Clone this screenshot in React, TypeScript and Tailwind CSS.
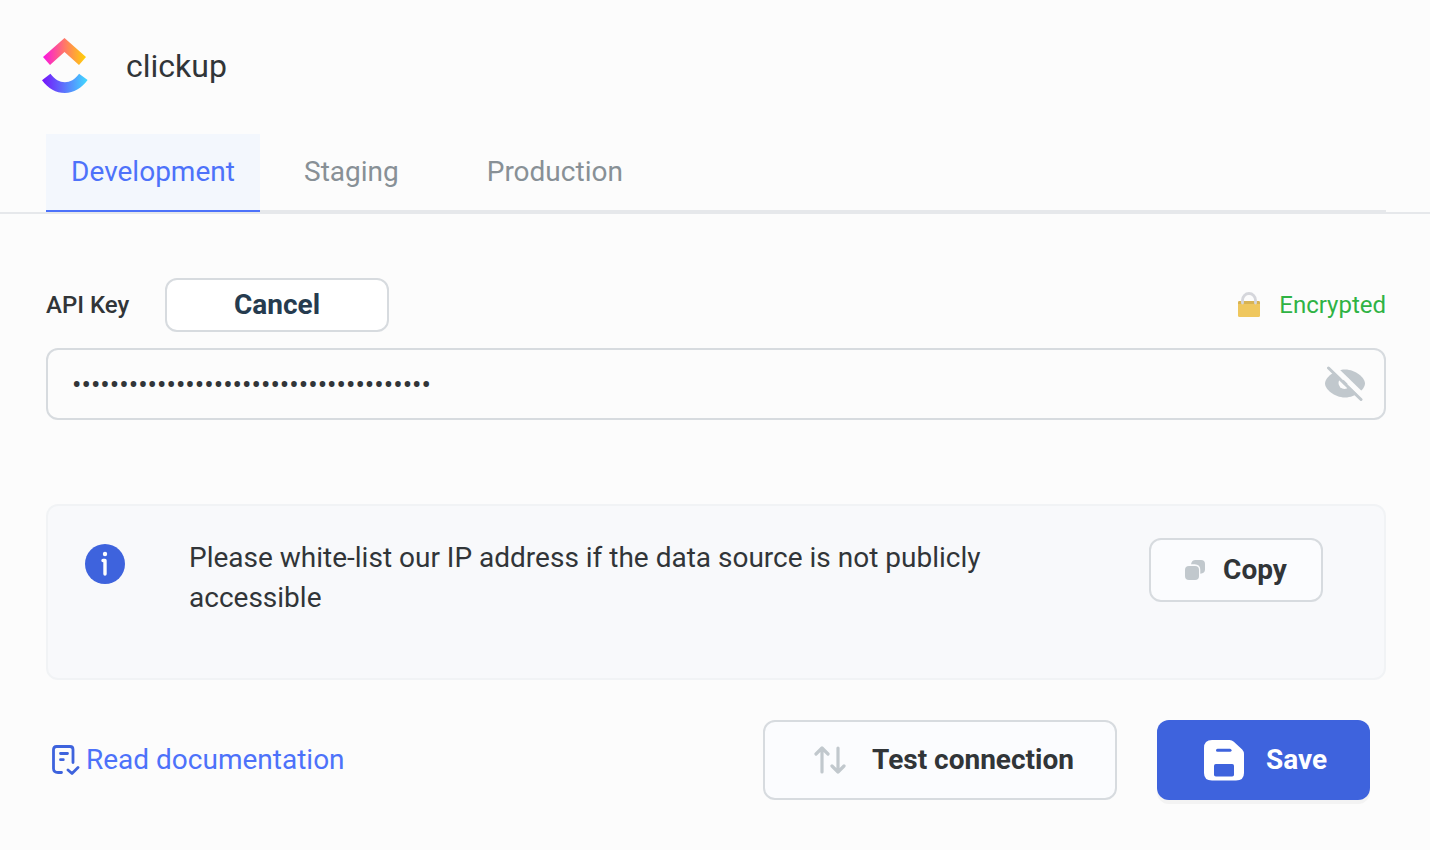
import { useState } from "react";

const ENVIRONMENTS = ["Development", "Staging", "Production"];

function ClickUpLogo() {
  return (
    <svg width="46" height="56" viewBox="0 0 46 56" fill="none" aria-hidden="true">
      <defs>
        <linearGradient id="arc" x1="0" y1="0" x2="46" y2="0" gradientUnits="userSpaceOnUse">
          <stop stopColor="#7612FA" />
          <stop offset="1" stopColor="#40DDFF" />
        </linearGradient>
        <linearGradient id="peak" x1="1" y1="0" x2="45" y2="0" gradientUnits="userSpaceOnUse">
          <stop stopColor="#FA12E3" />
          <stop offset="0.5" stopColor="#FF7A66" />
          <stop offset="1" stopColor="#FFD700" />
        </linearGradient>
      </defs>
      <path d="M0 42.2 8.4 35.7C12.9 41.5 17.6 44.2 22.9 44.2 28.2 44.2 32.8 41.6 37.1 35.8L45.6 42.1C39.4 50.5 31.8 55 22.9 55 14 55 6.3 50.5 0 42.2Z" fill="url(#arc)" />
      <path d="M22.500 14.1 8 27 1 19 22.500 0 44 19 37 27Z" fill="url(#peak)" />
    </svg>
  );
}

function LockIcon() {
  return (
    <svg width="24" height="26" viewBox="0 0 24 26" fill="none" aria-hidden="true">
      <rect x="1" y="9" width="22" height="16" rx="1.5" fill="#EFC75E" />
      <path d="M1 12V10.500Q1 9 2.500 9H21.500Q23 9 23 10.500V12Z" fill="#D7B354" />
      <path d="M5.500 11V8a6.500 6.500 0 0 1 13 0v3" stroke="#D5D6DB" strokeWidth="2.800" strokeLinecap="round" />
    </svg>
  );
}

function HiddenEyeIcon() {
  return (
    <svg width="40" height="36" viewBox="0 0 40 36" fill="none" aria-hidden="true">
      <path d="M0 17.500C0 12 9 3.500 20 3.500S40 12 40 17.500 31 31.500 20 31.500 0 23 0 17.500Z" fill="#C1C8CD" />
      <circle cx="19.500" cy="17" r="6" fill="#FCFCFC" />
      <path d="M5.500 -1.500 39.500 31.500" stroke="#FCFCFC" strokeWidth="5.500" />
      <circle cx="20.500" cy="16" r="2.800" fill="#C1C8CD" />
      <path d="M8.500 1.500 39 31.500" stroke="#FCFCFC" strokeWidth="3.500" />
      <path d="M3.500 2 36 33.500" stroke="#C1C8CD" strokeWidth="3" strokeLinecap="round" />
    </svg>
  );
}

function InfoIcon() {
  return (
    <svg width="40" height="40" viewBox="0 0 40 40" fill="none" aria-hidden="true">
      <circle cx="20" cy="20" r="20" fill="#3E63DD" />
      <circle cx="20" cy="10" r="2.200" fill="#FDFDFE" />
      <path d="M18 16.500h2V30" stroke="#FDFDFE" strokeWidth="3.400" strokeLinecap="round" strokeLinejoin="round" />
    </svg>
  );
}

function CopyIcon() {
  return (
    <svg width="20" height="20" viewBox="0 0 20 20" fill="#C1C8CD" aria-hidden="true">
      <rect x="0" y="6" width="14" height="14" rx="4" />
      <path d="M6 4.300Q6.700 0 10.500 0H16q4 0 4 4v5.500q0 3.800-4.700 4.200V10q0-5.500-5.500-5.700Z" />
    </svg>
  );
}

function DocumentIcon() {
  return (
    <svg width="28" height="30" viewBox="0 0 28 30" fill="none" stroke="#3E63DD" strokeWidth="2.800" strokeLinecap="round" strokeLinejoin="round" aria-hidden="true">
      <path d="M9.500 27.500H6Q1.500 27.500 1.500 23.500V4.500Q1.500 1.500 4.500 1.500H18q3 0 3 3V17.500" />
      <path d="M8.500 8.500h7M8.500 14.700h2.800M16 25l4 3.500 6-6" />
    </svg>
  );
}

function TransferIcon() {
  return (
    <svg width="32" height="28" viewBox="0 0 32 28" fill="none" stroke="#C1C8CD" strokeWidth="3.200" strokeLinecap="round" strokeLinejoin="round" aria-hidden="true">
      <path d="M8 26V2M2 8l6-6 6 6M24 2v24M18 20l6 6 6-6" />
    </svg>
  );
}

function SaveIcon() {
  return (
    <svg width="40" height="41" viewBox="0 0 40 41" fill="none" aria-hidden="true">
      <path d="M8 0H25.500Q28 0 29.800 1.800L38.200 9.500Q40 11.500 40 14V33Q40 40.500 32 40.500H8Q0 40.500 0 33V8Q0 0 8 0Z" fill="#FFFFFF" />
      <path d="M13.500 10.200h12.500" stroke="#3E63DD" strokeWidth="3" strokeLinecap="round" />
      <rect x="10" y="24" width="20" height="12.500" rx="1.800" fill="#3E63DD" />
    </svg>
  );
}

export default function App() {
  const [active, setActive] = useState("Development");
  const [visible, setVisible] = useState(false);
  const [apiKey, setApiKey] = useState("pk_48210937_Q7ZC2M9XK4TB8VJ1LW6RN3HD5F");

  return (
    <main className="min-h-screen bg-[#fcfcfc] font-[Roboto,sans-serif] text-[28px] leading-10 text-[#313538]">
      <header className="flex items-center gap-[38px] px-[42px] pt-[37px] pb-[39px]">
        <ClickUpLogo />
        <h1 className="text-[32px] leading-[58px]">clickup</h1>
      </header>

      <nav className="border-b-2 border-[#e6e8eb] pr-11 pl-[46px]">
        <div role="tablist" className="flex h-[78px] border-b-2 border-[#e6e8eb]">
          {ENVIRONMENTS.map((name) => (
            <button
              key={name}
              type="button"
              role="tab"
              aria-selected={name === active}
              onClick={() => setActive(name)}
              className={
                name === active
                  ? "-mb-0.5 w-[214px] border-b-2 border-[#4d72fa] bg-[#f3f7fd] text-[#4d72fa]"
                  : "px-11 text-[#889096]"
              }
            >
              {name}
            </button>
          ))}
        </div>
      </nav>

      <form className="pt-16 pr-11 pl-[46px]" onSubmit={(e) => e.preventDefault()}>
        <div className="flex items-center">
          <label htmlFor="api-key" className="w-[119px] text-2xl font-medium">
            API Key
          </label>
          <button type="button" className="h-[54px] w-[224px] rounded-xl border-2 border-[#d7dbdf] bg-white font-bold text-[#263b4f]">
            Cancel
          </button>
          <span className="ml-auto flex items-center gap-[18px] text-2xl text-[#2fb344]">
            <LockIcon />
            Encrypted
          </span>
        </div>

        <div className="mt-4 flex h-18 items-center rounded-xl border-2 border-[#d7dbdf] pr-[19px] pl-6">
          <input
            id="api-key"
            type={visible ? "text" : "password"}
            value={apiKey}
            onChange={(e) => setApiKey(e.target.value)}
            className="h-full min-w-0 flex-1 bg-transparent outline-none"
          />
          <button type="button" aria-label="Toggle API key visibility" onClick={() => setVisible(!visible)}>
            <HiddenEyeIcon />
          </button>
        </div>

        <section className="mt-[84px] flex h-44 items-start rounded-xl border-2 border-[#f1f3f5] bg-[#f8f9fb] pt-8 pr-[61px] pl-[37px]">
          <span className="mt-1.5 mr-16 shrink-0">
            <InfoIcon />
          </span>
          <p className="max-w-[860px] flex-1">
            Please white-list our IP address if the data source is not publicly accessible
          </p>
          <button type="button" className="ml-auto flex h-16 w-[174px] shrink-0 items-center justify-center gap-[18px] rounded-xl border-2 border-[#d7dbdf] bg-[#fbfcfe] font-bold">
            <CopyIcon />
            Copy
          </button>
        </section>

        <footer className="mt-10 flex items-center pr-4 pb-[50px]">
          <a href="#documentation" className="flex items-center gap-1.5 pl-1.5 text-[#4d72fa]">
            <DocumentIcon />
            Read documentation
          </a>
          <button type="button" className="ml-auto flex h-20 w-[354px] items-center justify-center gap-[26px] rounded-xl border-2 border-[#d7dbdf] bg-[#fbfcfe] pl-2 font-bold">
            <TransferIcon />
            Test connection
          </button>
          <button type="submit" className="ml-10 flex h-20 w-[213px] items-center justify-center gap-[22px] rounded-xl bg-[#3e63dd] pl-1 font-bold text-white shadow-[0_4px_0_#f3f3f3]">
            <SaveIcon />
            Save
          </button>
        </footer>
      </form>
    </main>
  );
}
